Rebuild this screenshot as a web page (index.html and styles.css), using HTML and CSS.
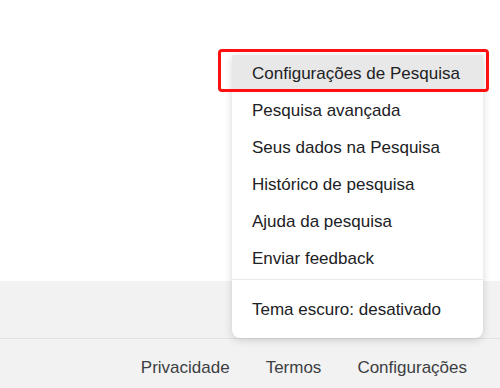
FILE: index.html
```html
<!DOCTYPE html>
<html lang="pt-BR">
<head>
    <meta charset="UTF-8">
    <meta name="viewport" content="width=device-width, initial-scale=1.0">
    <title>Configurações</title>
    <link rel="stylesheet" href="styles.css">
</head>
<body>
    <div class="page">
        <div class="top"></div>
        <div class="band"></div>
        <footer class="footer">
            <a href="#">Privacidade</a>
            <a href="#">Termos</a>
            <a href="#">Configurações</a>
        </footer>

        <!-- menu aberto a partir de "Configurações" -->
        <div class="menu">
            <div class="group">
                <a class="item active" href="#">Configurações de Pesquisa</a>
                <a class="item" href="#">Pesquisa avançada</a>
                <a class="item" href="#">Seus dados na Pesquisa</a>
                <a class="item" href="#">Histórico de pesquisa</a>
                <a class="item" href="#">Ajuda da pesquisa</a>
                <a class="item" href="#">Enviar feedback</a>
            </div>
            <div class="group last">
                <a class="item" href="#">Tema escuro: desativado</a>
            </div>
        </div>
        <div class="mark"></div>
    </div>
</body>
</html>
```

FILE: styles.css
```css
body {
    margin: 0;
    font-family: "Liberation Sans", Arial, sans-serif;
    font-size: 17px;
    color: #202124;
}

.page {
    position: relative;
    width: 500px;
    height: 388px;
    overflow: hidden;
    background-color: #f2f2f2;
}

.top {
    height: 281px;
    background-color: #fff;
}

.band {
    height: 57px;
    border-bottom: 1px solid #e2e2e2;
}

.footer {
    display: flex;
    justify-content: flex-end;
    gap: 36px;
    padding: 19px 33px 0 0;
    line-height: 20px;
}

.footer a {
    color: #3c4043;
    text-decoration: none;
}

.menu {
    position: absolute;
    top: 55px;
    left: 232px;
    width: 251px;
    background-color: #fff;
    border-radius: 0 0 8px 8px;
    box-shadow: 0 2px 8px rgba(0, 0, 0, 0.16);
}

.group {
    padding-bottom: 2px;
    border-bottom: 1px solid #e8eaed;
}

.group.last {
    padding: 11px 0 10px;
    border-bottom: none;
}

.item {
    display: block;
    padding-left: 20px;
    line-height: 37px;
    color: #202124;
    text-decoration: none;
    white-space: nowrap;
}

.item.active {
    background-color: #e8e8e8;
}

.mark {
    position: absolute;
    top: 49px;
    left: 218px;
    width: 265px;
    height: 37px;
    border: 3px solid #ff1010;
    border-radius: 4px;
}
```
